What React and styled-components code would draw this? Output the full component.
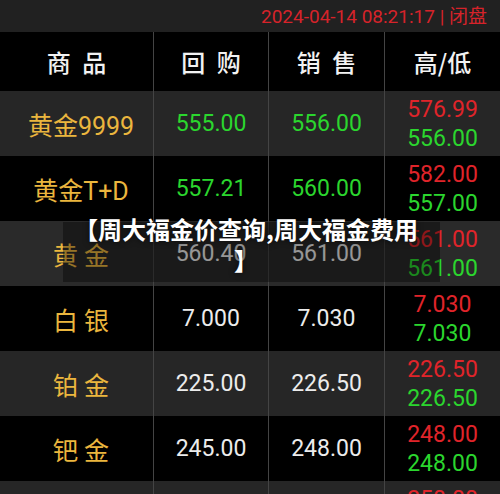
import React from "react";
import styled, { createGlobalStyle } from "styled-components";

const GlobalStyle = createGlobalStyle`
  html, body { margin: 0; padding: 0; background: #000; }
  body { font-family: Roboto, "Noto Sans CJK SC", sans-serif; }
  * { box-sizing: border-box; }
`;

const Page = styled.div`
  position: relative;
  width: 500px;
  height: 494px;
  overflow: hidden;
  background: #000;
`;

const TopBar = styled.div`
  height: 32px;
  background: #212121;
  display: flex;
  align-items: center;
  justify-content: flex-end;
  padding-right: 13px;
`;

const Stamp = styled.span`
  color: #d6232a;
  font-family: Roboto, "Noto Sans CJK SC", sans-serif;
  font-size: 19px;
  line-height: 1;
  white-space: pre;
`;

const Grid = styled.div`
  display: grid;
  grid-template-columns: 153px 115px 116px 116px;
  height: ${(p) => p.$h}px;
  background: ${(p) => p.$bg};
`;

const Cell = styled.div`
  display: flex;
  flex-direction: column;
  align-items: center;
  justify-content: center;
  border-left: ${(p) => (p.$first ? "none" : "1px solid #444")};
  padding-left: ${(p) => (p.$indent ? "9px" : "0")};
`;

const HeadText = styled.span`
  color: #f2f2f2;
  font-family: "Noto Sans CJK SC", sans-serif;
  font-weight: 500;
  font-size: 24px;
  word-spacing: 6px;
  white-space: pre;
`;

const Name = styled.span`
  color: #ebb63e;
  font-family: Roboto, "Noto Sans CJK SC", sans-serif;
  font-size: 25px;
  white-space: pre;
`;

const Num = styled.span`
  color: ${(p) => p.$c};
  font-family: Roboto, sans-serif;
  font-size: 23px;
  line-height: ${(p) => (p.$stack ? "29px" : "normal")};
`;

const Shade = styled.div`
  position: absolute;
  left: 63px;
  top: 222px;
  width: 377px;
  height: 60px;
  background: rgba(0, 0, 0, 0.36);
  pointer-events: none;
`;

const Title = styled.div`
  position: absolute;
  left: 69px;
  top: 213px;
  width: 354px;
  text-align: center;
  color: #fff;
  font-family: "Noto Sans CJK SC", sans-serif;
  font-weight: 700;
  font-size: 24px;
  line-height: 31px;
  line-break: anywhere;
  text-shadow: 0 0 6px rgba(0, 0, 0, 0.7);
`;

const G = "#2bd62e";
const R = "#e0242a";
const W = "#ececec";

const rows = [
  { name: "黄金9999", buy: "555.00", sell: "556.00", c: G, hi: "576.99", lo: "556.00", bg: "#262626" },
  { name: "黄金T+D", buy: "557.21", sell: "560.00", c: G, hi: "582.00", lo: "557.00", bg: "#000" },
  { name: "黄 金", buy: "560.40", sell: "561.00", c: W, hi: "561.00", lo: "561.00", bg: "#2a2a2a" },
  { name: "白 银", buy: "7.000", sell: "7.030", c: W, hi: "7.030", lo: "7.030", bg: "#000" },
  { name: "铂 金", buy: "225.00", sell: "226.50", c: W, hi: "226.50", lo: "226.50", bg: "#262626" },
  { name: "钯 金", buy: "245.00", sell: "248.00", c: W, hi: "248.00", lo: "248.00", bg: "#000" },
  { name: "铂金9995", buy: "248.00", sell: "250.00", c: W, hi: "250.00", lo: "248.00", bg: "#262626" },
];

export default function App() {
  return (
    <>
      <GlobalStyle />
      <Page>
        <TopBar>
          <Stamp>2024-04-14 08:21:17 | 闭盘</Stamp>
        </TopBar>
        <Grid $h={59} $bg="#000">
          <Cell $first>
            <HeadText>商 品</HeadText>
          </Cell>
          <Cell>
            <HeadText>回 购</HeadText>
          </Cell>
          <Cell>
            <HeadText>销 售</HeadText>
          </Cell>
          <Cell>
            <HeadText>高/低</HeadText>
          </Cell>
        </Grid>
        {rows.map((r, i) => (
          <Grid key={i} $h={65} $bg={r.bg}>
            <Cell $first $indent>
              <Name>{r.name}</Name>
            </Cell>
            <Cell>
              <Num $c={r.c}>{r.buy}</Num>
            </Cell>
            <Cell>
              <Num $c={r.c}>{r.sell}</Num>
            </Cell>
            <Cell>
              <Num $c={R} $stack>{r.hi}</Num>
              <Num $c={G} $stack>{r.lo}</Num>
            </Cell>
          </Grid>
        ))}
        <Shade />
        <Title>【周大福金价查询,周大福金费用】</Title>
      </Page>
    </>
  );
}
